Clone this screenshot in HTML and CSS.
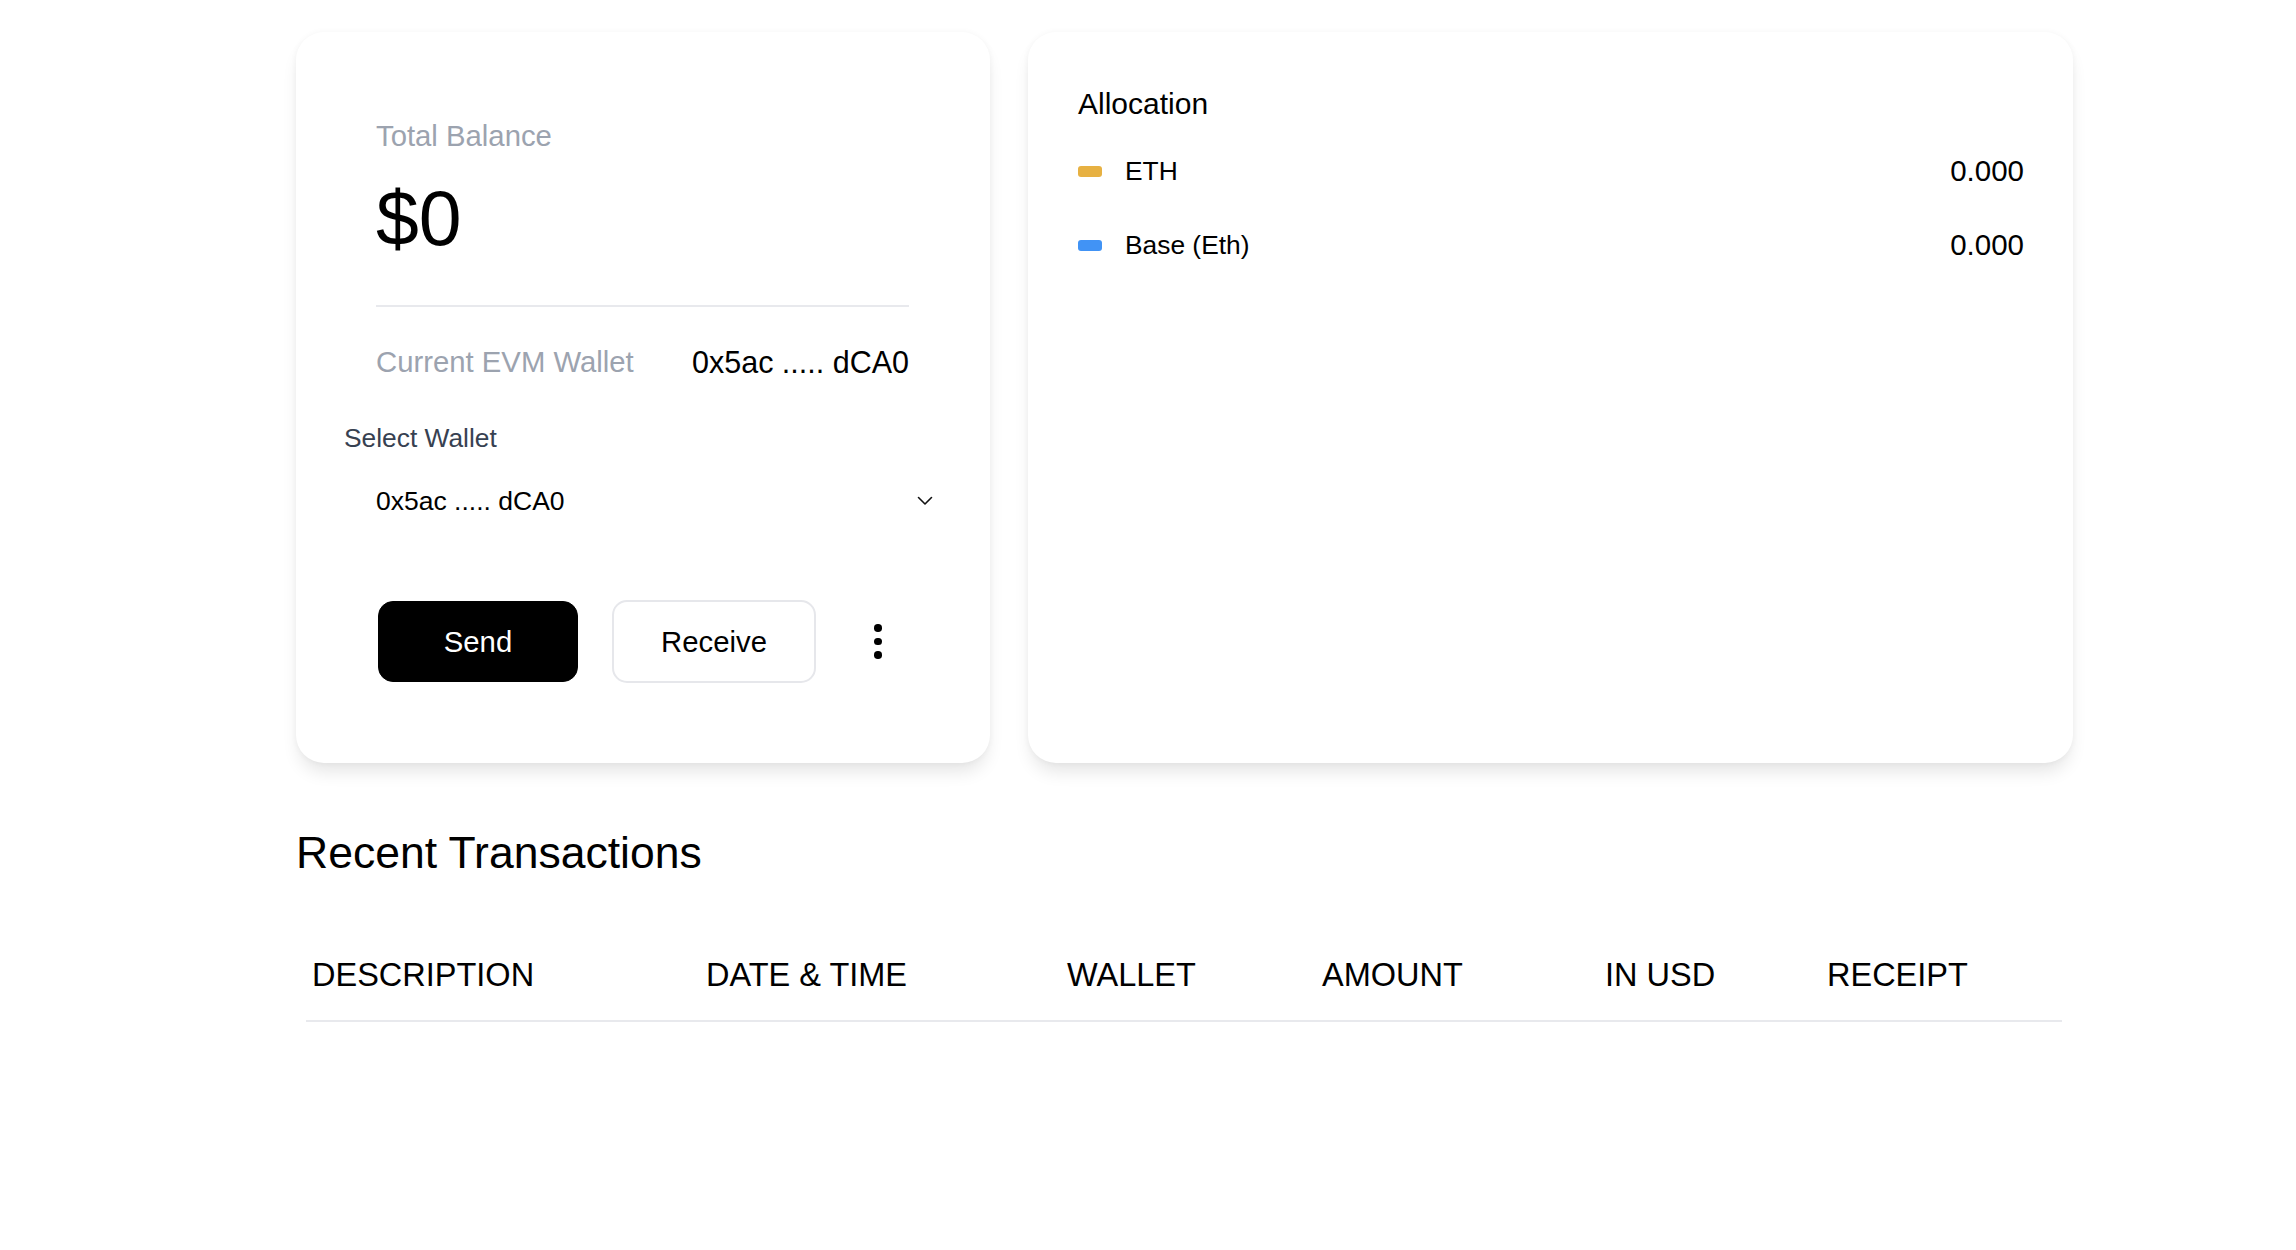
FILE: index.html
```html
<!DOCTYPE html>
<html lang="en">
<head>
<meta charset="utf-8">
<title>Wallet</title>
<link rel="stylesheet" href="styles.css">
</head>
<body>
<main class="page">
  <section class="cards">
    <div class="card balance-card">
      <div class="balance-section">
        <div class="label-muted">Total Balance</div>
        <div class="amount">$0</div>
        <div class="divider"></div>
        <div class="wallet-row">
          <span class="label-muted">Current EVM Wallet</span>
          <span class="wallet-addr">0x5ac ..... dCA0</span>
        </div>
      </div>
      <div class="select-label">Select Wallet</div>
      <div class="select">
        <span>0x5ac ..... dCA0</span>
        <svg class="chevron" width="16" height="10" viewBox="0 0 16 10"><path d="M1.5 1.5 L8 8 L14.5 1.5" fill="none" stroke="#111" stroke-width="1.6" stroke-linecap="round" stroke-linejoin="round"/></svg>
      </div>
      <div class="actions">
        <button class="btn btn-primary">Send</button>
        <button class="btn btn-outline">Receive</button>
        <div class="kebab"><span></span><span></span><span></span></div>
      </div>
    </div>
    <div class="card alloc-card">
      <div class="alloc-title">Allocation</div>
      <div class="alloc-row first">
        <span class="swatch swatch-eth"></span>
        <span class="alloc-name">ETH</span>
        <span class="alloc-val">0.000</span>
      </div>
      <div class="alloc-row">
        <span class="swatch swatch-base"></span>
        <span class="alloc-name">Base (Eth)</span>
        <span class="alloc-val">0.000</span>
      </div>
    </div>
  </section>
  <h2 class="section-title">Recent Transactions</h2>
  <div class="table">
    <div class="thead">
      <div>DESCRIPTION</div>
      <div>DATE &amp; TIME</div>
      <div>WALLET</div>
      <div>AMOUNT</div>
      <div>IN USD</div>
      <div>RECEIPT</div>
    </div>
  </div>
</main>
</body>
</html>
```
FILE: styles.css
```css
* { box-sizing: border-box; }
html, body { margin: 0; padding: 0; background: #fff; }
body {
  font-family: "Liberation Sans", Arial, Helvetica, sans-serif;
  color: #000;
}
.page {
  width: 1777px;
  margin-left: 296px;
  padding-top: 32px;
}
.cards {
  display: grid;
  grid-template-columns: 694px 1045px;
  gap: 38px;
}
.card {
  background: #fff;
  border-radius: 28px;
  height: 731px;
  box-shadow: 0 0 6px rgba(0,0,0,0.045), 0 12px 18px -4px rgba(0,0,0,0.11);
}
.balance-card {
  padding: 84px 48px 0 48px;
}
.balance-section {
  margin: 0 33px 0 32px;
}
.label-muted {
  color: #9ca3af;
  font-size: 29.3px;
  line-height: 40px;
}
.amount {
  margin-top: 20px;
  font-size: 77px;
  line-height: 84px;
  color: #000;
}
.divider {
  margin-top: 45px;
  height: 2px;
  background: #e8e9ed;
}
.wallet-row {
  margin-top: 35px;
  display: flex;
  justify-content: space-between;
  align-items: center;
}
.wallet-addr {
  font-size: 30.5px;
  line-height: 40px;
  color: #000;
}
.select-label {
  margin-top: 38px;
  font-size: 26.35px;
  line-height: 36px;
  color: #374151;
}
.select {
  margin-top: 13px;
  height: 64px;
  display: flex;
  align-items: center;
  justify-content: space-between;
  padding: 0 9px 0 32px;
  font-size: 26.5px;
  color: #000;
}
.chevron { display: block; }
.actions {
  margin-top: 67px;
  margin-left: 34px;
  display: flex;
  align-items: center;
}
.btn {
  font-family: inherit;
  font-size: 29.3px;
  height: 81px;
  border-radius: 15px;
  cursor: pointer;
}
.btn-primary {
  width: 200px;
  background: #000;
  color: #fff;
  border: 1px solid #000;
}
.btn-outline {
  margin-left: 34px;
  width: 204px;
  height: 83px;
  background: #fff;
  color: #000;
  border: 2px solid #e6e7eb;
}
.kebab {
  margin-left: 58px;
  display: flex;
  flex-direction: column;
  gap: 6px;
}
.kebab span {
  width: 7.5px;
  height: 7.5px;
  border-radius: 50%;
  background: #000;
}
.alloc-card {
  padding: 52px 49px 0 50px;
}
.alloc-title {
  font-size: 30px;
  line-height: 40px;
}
.alloc-row {
  display: flex;
  align-items: center;
  margin-top: 38px;
  font-size: 26.35px;
  line-height: 36px;
}
.alloc-row.first { margin-top: 29px; }
.swatch {
  width: 24px;
  height: 11px;
  border-radius: 3px;
  margin-right: 23px;
}
.swatch-eth { background: #e7b142; }
.swatch-base { background: #4193f5; }
.alloc-name { flex: 1; }
.alloc-val { text-align: right; font-size: 29.5px; }
.section-title {
  margin: 64px 0 0 0;
  font-size: 44.5px;
  line-height: 52px;
  font-weight: normal;
}
.table {
  margin: 74px 11px 0 10px;
}
.thead {
  display: grid;
  grid-template-columns: 394px 361px 255px 283px 222px 1fr;
  padding: 0 0 23px 6px;
  border-bottom: 2px solid #e8e9ed;
  font-size: 32.5px;
  line-height: 44px;
}
```
